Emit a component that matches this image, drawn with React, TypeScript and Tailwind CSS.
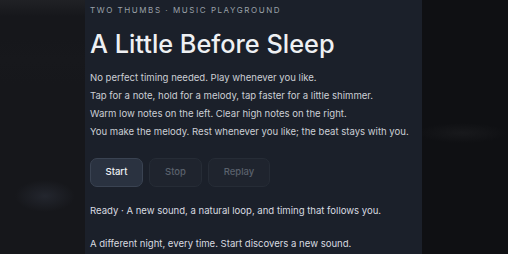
const LINES = [
    'No perfect timing needed. Play whenever you like.',
    'Tap for a note, hold for a melody, tap faster for a little shimmer.',
    'Warm low notes on the left. Clear high notes on the right.',
    'You make the melody. Rest whenever you like; the beat stays with you.',
]

function Btn({label, active, className}: { label: string, active?: boolean, className: string }) {
    const look = active
        ? 'border-[#3a4352] bg-[#2a3240] text-[#eef1f5]'
        : 'border-[#262c36] bg-[#1f242e] text-[#5a616c]'
    return <button type='button'
                   className={`h-[29px] rounded-[7px] border text-[9.5px] font-medium ${look} ${className}`}>
        {label}
    </button>
}

export default function App() {
    return <div
        className="flex h-[254px] w-[508px] overflow-hidden bg-[#111215] font-['Inter','Liberation_Sans',sans-serif]">
        <div
            className='w-[85px] shrink-0 bg-[radial-gradient(ellipse_30px_16px_at_45px_196px,#23262e_0,#16171b_100%),linear-gradient(#202125,#15161a_18px,#17181c_60px,#131418_160px)] bg-blend-lighten'/>

        <main className='w-[337px] shrink-0 bg-[#1b202a] pl-[5px] pt-[4px]'>
            <p className='text-[8px] leading-[12px] tracking-[1.55px] text-[#9aa0a9]'>TWO THUMBS · MUSIC PLAYGROUND</p>
            <h1 className='mt-[12px] text-[25.3px] leading-[32px] font-medium text-[#eef0f3]'>A Little Before Sleep</h1>

            <div className='mt-[8.5px] flex flex-col text-[9.55px] leading-[18px] text-[#cbcfd5]'>
                {LINES.map((line) => <p key={line}>{line}</p>)}
            </div>

            <div className='mt-[17.5px] flex gap-[6px]'>
                <Btn label='Start' active className='w-[53px]'/>
                <Btn label='Stop' className='w-[53px]'/>
                <Btn label='Replay' className='w-[62px]'/>
            </div>

            <p className='mt-[14.5px] text-[9.55px] leading-[18px] text-[#d8dbe0]'>Ready · A new sound, a natural loop, and timing that follows you.</p>
            <p className='mt-[15px] text-[9.55px] leading-[18px] text-[#d8dbe0]'>A different night, every time. Start discovers a new sound.</p>
        </main>

        <div
            className='flex-1 bg-[radial-gradient(ellipse_45px_10px_at_40px_133px,#18191c_0,#0f1013_100%)]'/>
    </div>
}
